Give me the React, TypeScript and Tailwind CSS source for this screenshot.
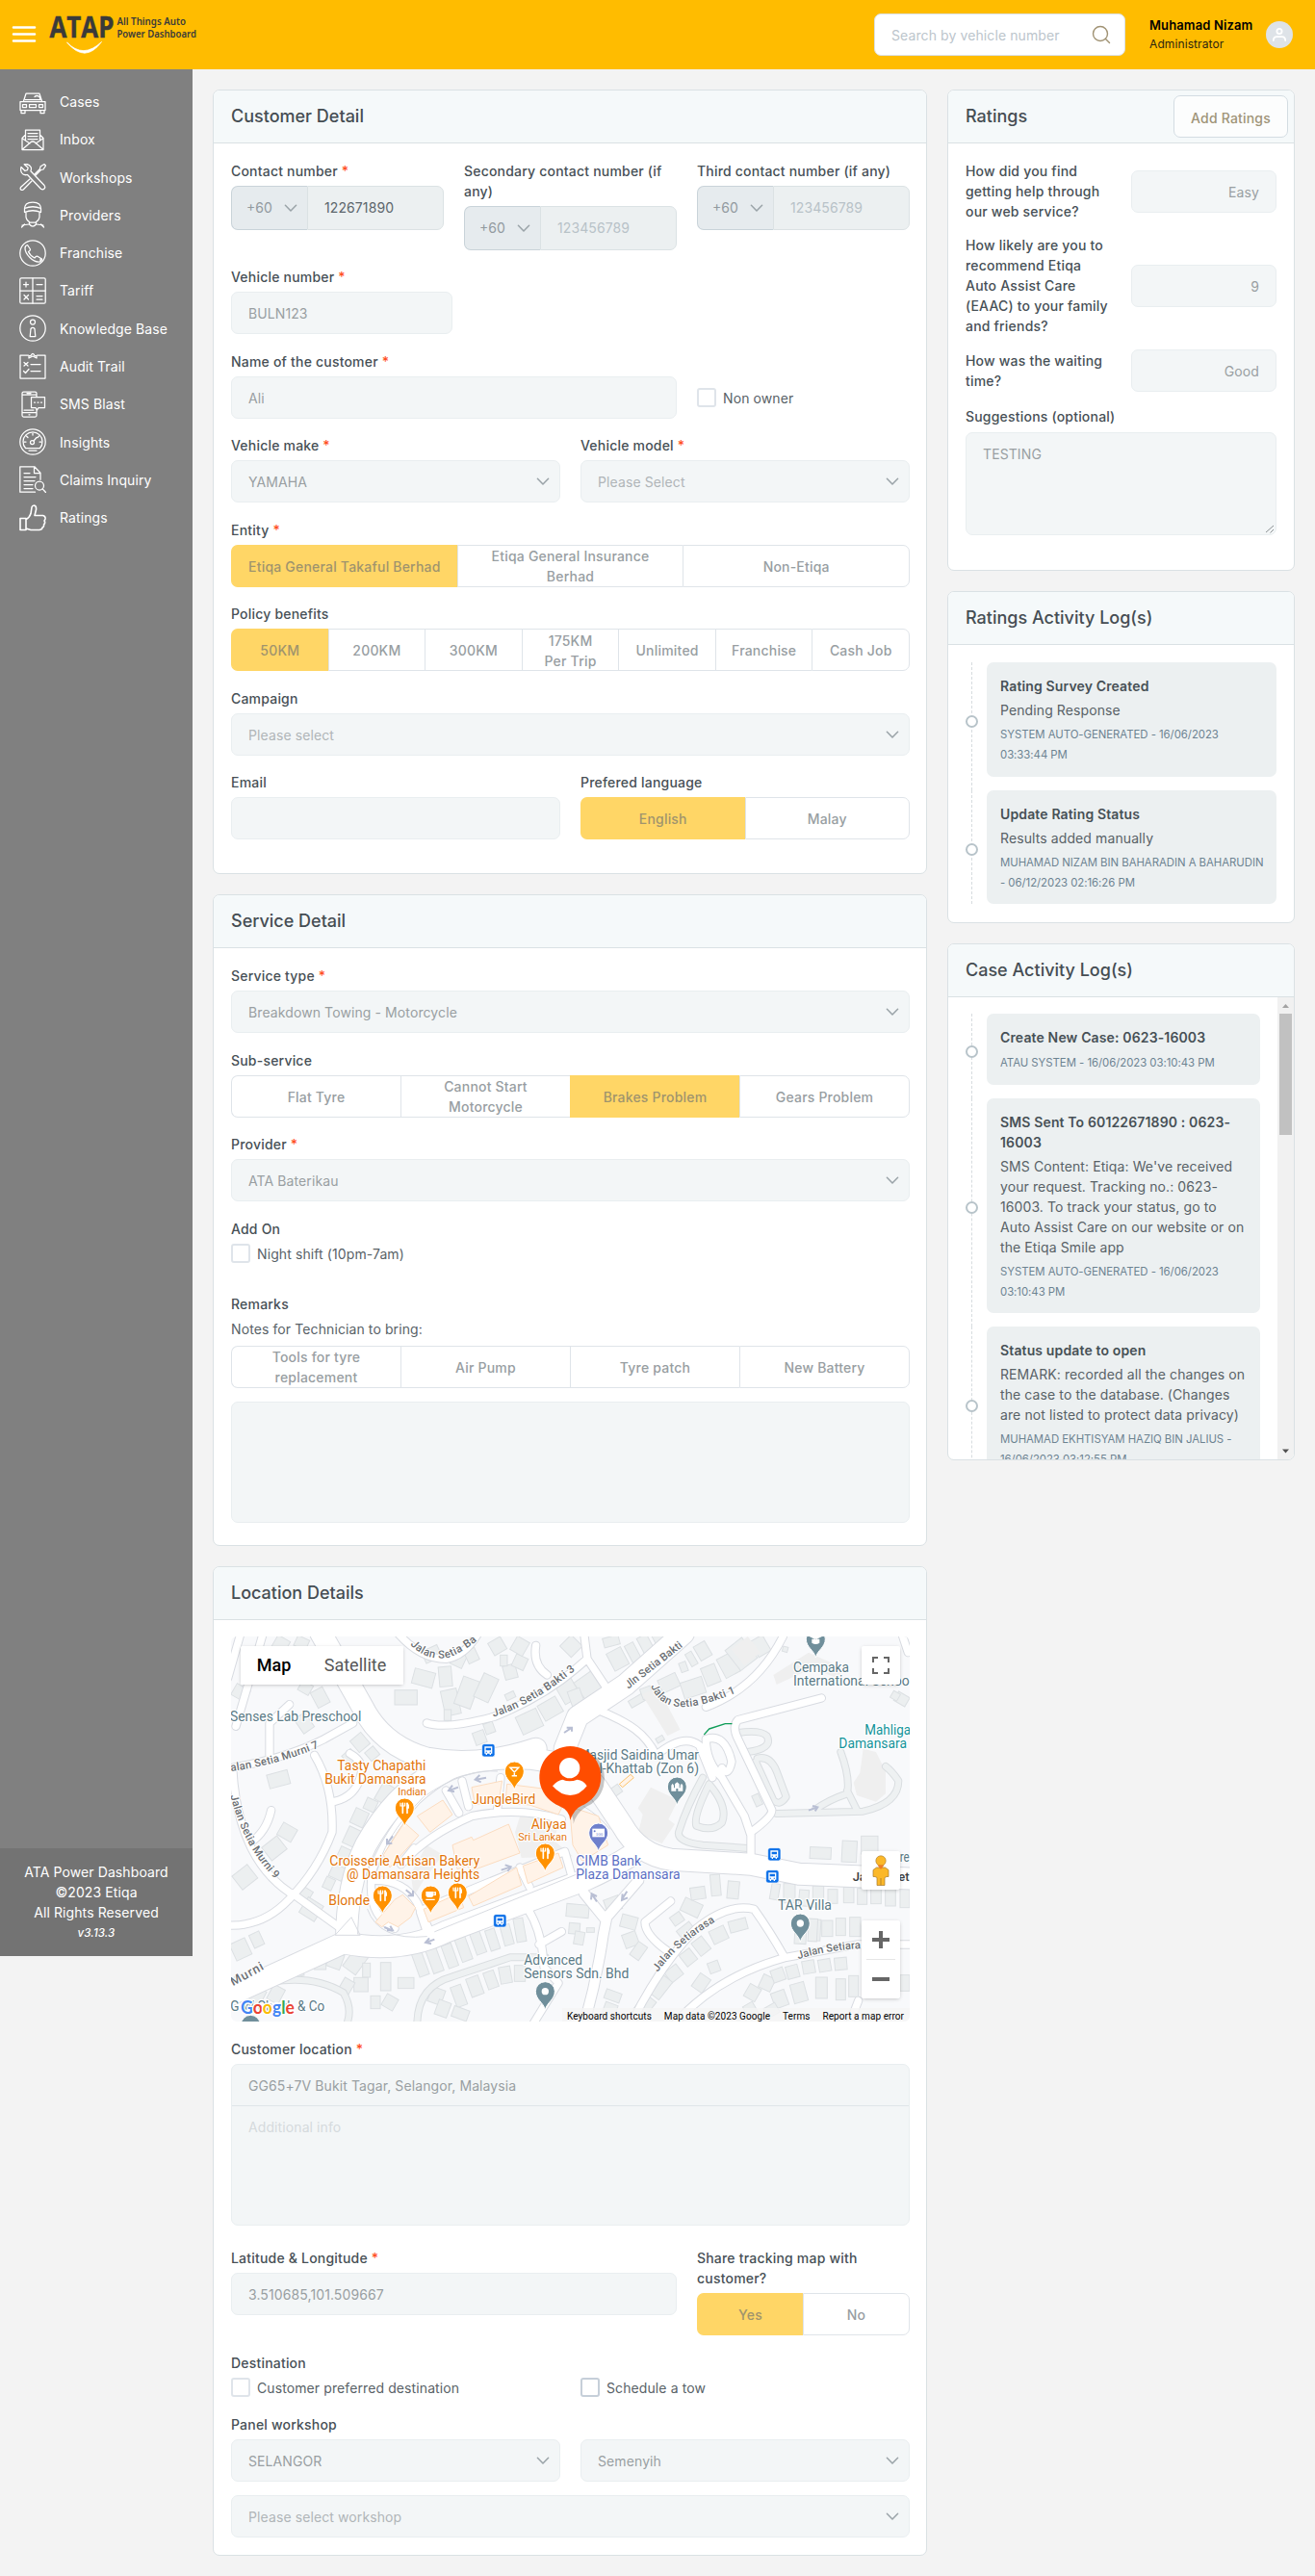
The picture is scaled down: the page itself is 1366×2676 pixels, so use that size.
import type { ReactNode } from "react";

/* ---------- shared form pieces ---------- */

function Chevron({ className = "" }: { className?: string }) {
  return (
    <svg width="14" height="14" viewBox="0 0 14 14" fill="none" className={"shrink-0 " + className}>
      <path d="M1.4 4.2 7 10l5.6-5.8" stroke="#9aa3a8" strokeWidth="1.5" strokeLinecap="round" strokeLinejoin="round" />
    </svg>
  );
}

function Label({ children, required = false }: { children: ReactNode; required?: boolean }) {
  return (
    <div className="mb-[5px] text-[14px] leading-[21px] font-medium tracking-[0.2px] text-[#475056]">
      {children}
      {required && <span className="text-[#ff4f1f]"> *</span>}
    </div>
  );
}

function Field({ label, required, className = "", children }: { label: string; required?: boolean; className?: string; children: ReactNode }) {
  return (
    <div className={className}>
      <Label required={required}>{label}</Label>
      {children}
    </div>
  );
}

function Input({ value = "", right = false }: { value?: string; right?: boolean }) {
  return (
    <div
      className={
        "flex h-11 items-center rounded-[7px] border border-[#e9eef0] bg-[#f3f6f7] px-[17px] pt-px text-[14px] leading-[21px] tracking-[0.1px] text-[#999fa2] " +
        (right ? "justify-end" : "")
      }
    >
      {value}
    </div>
  );
}

function Select({ value, muted = false }: { value: string; muted?: boolean }) {
  return (
    <div className="flex h-11 items-center justify-between rounded-[7px] border border-[#e9eef0] bg-[#f3f6f7] pr-[10px] pl-[17px] text-[14px] leading-[21px] tracking-[0.1px]">
      <span className={muted ? "pt-px text-[#b0b5b8]" : "pt-px text-[#999fa2]"}>{value}</span>
      <Chevron />
    </div>
  );
}

function Phone({ value, filled = false }: { value: string; filled?: boolean }) {
  return (
    <div className="flex h-[46px] text-[14px] leading-[21px]">
      <div className="flex w-[79px] shrink-0 items-center justify-between rounded-l-[7px] border border-r-0 border-[#c9d3d9] bg-[#e6ebee] pr-[10px] pl-[15px] text-[#929a9f]">
        <span>+60</span>
        <Chevron />
      </div>
      <div
        className={
          "flex grow items-center rounded-r-[7px] border border-[#dbe2e4] bg-[#ecf0f1] pl-[17px] tracking-[0.1px] " +
          (filled ? "text-[#5c666c]" : "text-[#b8c2c8]")
        }
      >
        {value}
      </div>
    </div>
  );
}

function Segmented({ items, selected = -1 }: { items: string[]; selected?: number }) {
  return (
    <div className="flex h-11 text-[14px] leading-[21px] font-medium tracking-[0.2px]">
      {items.map((item, i) => (
        <div
          key={item}
          className={
            "flex min-w-0 flex-1 items-center justify-center border-y text-center whitespace-pre-line " +
            (i === 0 ? "rounded-l-[7px] border-l " : "border-l ") +
            (i === items.length - 1 ? "rounded-r-[7px] border-r " : "") +
            (i === selected
              ? "border-[#ffd666] bg-[#ffd666] text-[#9f946d]"
              : "border-[#dfe4e9] text-[#989ea2]")
          }
        >
          <span className="pt-px">{item}</span>
        </div>
      ))}
    </div>
  );
}

function Check({ label, dark = false }: { label: string; dark?: boolean }) {
  return (
    <div className="flex h-5 items-center gap-[7px] text-[14px] leading-[21px] tracking-[0.1px] text-[#596267]">
      <span className={"h-5 w-5 rounded-[3px] border-2 bg-white " + (dark ? "border-[#c6cfd9]" : "border-[#dfe4ea]")} />
      <span className="pt-px">{label}</span>
    </div>
  );
}

function Card({ title, action, children }: { title: string; action?: ReactNode; children: ReactNode }) {
  return (
    <section className="overflow-hidden rounded-[7px] border border-[#dae1e4] bg-white">
      <header className="flex h-[55px] items-center justify-between border-b border-[#dae1e4] bg-[#f5f9fa] pr-[6px] pl-[18px]">
        <h2 className="text-[18px] leading-[24px] font-medium text-[#454d53]">{title}</h2>
        {action}
      </header>
      {children}
    </section>
  );
}

/* ---------- sidebar ---------- */

const icons: Record<string, ReactNode> = {
  Cases: (
    <>
      <path d="M4.5 13 7 5.2h14L23.5 13M1 13.5h26v9H1zM2 22.5v3h4v-3M22 22.5v3h4v-3M16 8.5q2-2 5 0l1 3" />
      <path d="M3.5 16.5h4v3h-4zM20.5 16.5h4v3h-4zM10.5 16.5h7v3h-7zM6 11.5h16" />
    </>
  ),
  Inbox: (
    <>
      <path d="M3 12.5v12h22v-12M3 12.5l3-3M25 12.5l-3-3M6.5 15V4h15v11M3.5 13l7.5 5M24.5 13 17 18M3.5 24l8-7q2.500-2 5 0l8 7" />
      <path d="M9 7.500h10M9 10.500h10M9 13.500h10" />
    </>
  ),
  Workshops: (
    <>
      <path d="M2 3.500l4 4 2.500-.8.700-2.500-4-3.500q5-1 7 3 .6 2-.3 4L26 22.500q1.500 2 0 3.500t-3.500.2L8.500 11.500q-4 1-6-2-1.500-3-.5-6z" />
      <path d="M16 11 21.500 5.500 22 3l4-2.500 1.500 1.500L25 6l-2.500.5L17 12M11 16 1.500 24.500q-.8 1.500.2 2.500t2.500 0L13 18" />
    </>
  ),
  Providers: (
    <>
      <path d="M5.500 9Q5 1 14 1t8.500 8M5.500 7.500q8.500-3.500 17 0v4q-8.500-3.500-17 0zM7 11.500v5Q7.500 20 11 22h6q3.500-2 4-5.500v-5M10.500 21.500v2.500q3.500 4 7 0v-2.500" />
      <path d="M10 24l-7 1M18 24l7 1M2.500 27l3-3M25.500 27l-3-3" />
    </>
  ),
  Franchise: (
    <>
      <circle cx="14" cy="14" r="13.200" />
      <path d="M6 9q0-3 2.500-3.500l3 4.500q0 1.500-2 2.500 2 4.500 6.500 6.500 1-2 2.500-2l5 3q.5 2-2.500 3-5 .5-10-4.500T6 9zM22 20v3" />
    </>
  ),
  Tariff: (
    <>
      <rect x=".8" y=".8" width="26.400" height="26.400" rx="1.500" />
      <path d="M14 1v26M1 14h26M4.500 7.500h5M7 5v5M18 7.500h6M5 18.500l4.500 4.500M9.500 18.500 5 23M18 19.500h6M18 23h6" />
    </>
  ),
  "Knowledge Base": (
    <>
      <circle cx="14" cy="14" r="13.200" />
      <circle cx="14" cy="7.500" r="2.500" />
      <path d="M12 14.500q2-2.500 4 0l.8 8h-5.600z" />
    </>
  ),
  "Audit Trail": (
    <>
      <path d="M9.500 3H1v24h26V3h-8.500" />
      <path d="M10 6V3.500h2Q14-1 16 3.500h2V6l-4-2zM5 10.500l4 3.500M9 10.500 5 14M12 12.500h10M4.500 19.500l2 2 3.500-4M12 19.500h10" />
    </>
  ),
  "SMS Blast": (
    <>
      <path d="M18 6V2.500Q18 1 16.500 1h-12Q3 1 3 2.500v23Q3 27 4.500 27h12q1.500 0 1.500-1.500V19M3 4h15M3 22.500h15M8 2.500h4M10 24.800h1" />
      <path d="M12.500 6.500h14v11H20l-1.500 2.500-1.500-2.500h-4.500zM15.500 12h1M19 12h1M22.500 12h1M5 20h10" />
    </>
  ),
  Insights: (
    <>
      <circle cx="14" cy="14" r="13.200" />
      <path d="M6.500 20.500a10 10 0 1 1 15 0zM10 23h8" />
      <circle cx="13.500" cy="14.500" r="2" />
      <path d="M15 13l3-3.500M14 5v2M7.500 8l1.500 1.500M20.500 8 19 9.500M5 14h2M21 14h2" />
    </>
  ),
  "Claims Inquiry": (
    <>
      <path d="M16.500 27.200H.8V.8h15l6.200 6.500v7M15.500 1v6.500H22M5 7.500h6M5 11.500h12M5 15.500h11M5 19.500h9M5 23.500h9" />
      <circle cx="21" cy="20.500" r="4.500" />
      <path d="M24.200 23.800 27.500 27.500" />
    </>
  ),
  Ratings: (
    <path d="M1 14.500h6V26.500H1zM7 15.500q3.500-1.500 5-6l1-6.500q.5-2 2.500-2 2.500.5 2 4.500l-1.500 6h8.500q3 .5 2.500 3.500-.5 1.500-1 2 1.500 2-.5 4 .5 2.500-1.500 3 0 2-3 2.500H12l-5-1.500" strokeWidth="1.600" />
  ),
};

const menu = Object.keys(icons);

function Sidebar() {
  return (
    <aside className="flex h-[1960px] w-[200px] shrink-0 flex-col justify-between bg-[#808080] text-white">
      <nav className="pt-[14px]">
        {menu.map((name) => (
          <a key={name} className="flex h-[39.270px] items-center gap-[14px] pl-5 text-[14px] leading-[21px] tracking-[0.1px]">
            <svg width="28" height="28" viewBox="0 0 28 28" fill="none" stroke="#fff" strokeWidth="1.250" strokeLinejoin="round" strokeLinecap="round">
              {icons[name]}
            </svg>
            <span>{name}</span>
          </a>
        ))}
      </nav>
      <footer className="h-28 bg-[#737373] pt-[14px] text-center text-[14px] leading-[21px] tracking-[0.1px]">
        ATA Power Dashboard
        <br />
        ©2023 Etiqa
        <br />
        All Rights Reserved
        <div className="pt-px text-[11.500px] font-medium italic">v3.13.3</div>
      </footer>
    </aside>
  );
}

/* ---------- header ---------- */

function TopBar() {
  return (
    <header className="flex h-[72px] items-center justify-between bg-[#ffbc00] pr-[23px] pl-[12px]">
      <div className="flex items-center">
        <svg width="26" height="20" viewBox="0 0 26 20" stroke="#fff" strokeWidth="2.600" strokeLinecap="round">
          <path d="M2 2.500h22M2 9.500h22M2 16.500h22" />
        </svg>
        <svg width="160" height="72" viewBox="0 -14 160 72" className="ml-3">
          <text x="1.500" y="25" fontFamily="Open Sans, Noto Sans" fontWeight="700" fontSize="30.500" fill="#3a3a3a" stroke="#3a3a3a" strokeWidth=".5" textLength="67" lengthAdjust="spacingAndGlyphs">
            ATAP
          </text>
          <g fontFamily="Noto Sans" fontWeight="600" fontSize="11.500" fill="#3a3a3a">
            <text x="71.500" y="12" textLength="71.500" lengthAdjust="spacingAndGlyphs">All Things Auto</text>
            <text x="71.500" y="25" textLength="82.500" lengthAdjust="spacingAndGlyphs">Power Dashboard</text>
          </g>
          <path d="M19.500 30q17 17.500 36-.5-17 23-36 .5z" fill="#fff" stroke="#fff" strokeWidth=".8" strokeLinejoin="round" />
        </svg>
      </div>
      <div className="flex items-center">
        <div className="flex h-11 w-[261px] items-center justify-between rounded-[7px] border border-[#dbe1e6] bg-white pr-[14px] pl-[17px] text-[14px] leading-[21px] tracking-[0.1px] text-[#bcc5cc]">
          <span className="pt-px">Search by vehicle number</span>
          <svg width="20" height="20" viewBox="0 0 20 20" fill="none" stroke="#a09273" strokeWidth="1.400" strokeLinecap="round">
            <circle cx="9" cy="9" r="7.500" />
            <path d="m14.500 14.500 4 4" />
          </svg>
        </div>
        <div className="ml-[25px] w-[121px]">
          <div className="text-[13px] leading-[19px] font-semibold tracking-[0.120px] text-black">Muhamad Nizam</div>
          <div className="text-[12px] leading-[19px] tracking-[0.1px] text-[#2c2510]">Administrator</div>
        </div>
        <svg width="28" height="28" viewBox="0 0 28 28" fill="none" stroke="#fff" strokeWidth="1.800" strokeLinecap="round">
          <circle cx="14" cy="14" r="14" fill="#dee3e8" stroke="none" />
          <circle cx="14" cy="10.500" r="2.600" />
          <path d="M7.800 20q0-3.800 3.700-3.800h5q3.700 0 3.700 3.800" />
        </svg>
      </div>
    </header>
  );
}

/* ---------- map ---------- */

type Block = [number, number, number, number, number];

/* Buildings: centre x, centre y, width, height, rotation. */
const houses: Block[] = [
  [60, 205, 48, 40, 30], [105, 140, 40, 48, 28], [160, 110, 40, 50, 28], [185, 55, 44, 44, 30], [308, 220, 42, 54, -28], [262, 190, 38, 34, 30], [258, 300, 40, 54, -35], [250, 50, 40, 34, 25],
  [178, 475, 66, 44, -15], [510, 520, 44, 60, 30], [432, 360, 44, 46, -40], [400, 405, 36, 36, -40], [470, 395, 34, 34, -40],
  [165, 690, 60, 52, -38], [205, 640, 50, 44, 30], [73, 780, 60, 54, -38], [252, 835, 50, 50, 32], [280, 880, 56, 56, 32], [430, 595, 44, 50, 25], [408, 655, 44, 56, 25], [385, 712, 44, 44, 25], [362, 765, 44, 42, 25], [335, 800, 30, 36, 25], [465, 555, 36, 36, 25],
  [60, 1005, 52, 56, -25], [110, 975, 34, 44, -25], [60, 1110, 52, 50, -25], [110, 1150, 44, 50, 28], [170, 1145, 40, 50, 28],
  [185, 1075, 44, 50, -20], [232, 1065, 40, 54, -15], [308, 1038, 36, 60, 0], [355, 1040, 44, 48, 20], [420, 1040, 50, 76, 36],
  [452, 1070, 24, 44, 0], [435, 1115, 44, 44, 0], [512, 1090, 32, 88, 0], [575, 1110, 50, 34, 0], [480, 1170, 30, 40, 0], [525, 1170, 40, 40, 30], [390, 1120, 36, 44, 30],
  [620, 1050, 32, 78, -20], [665, 1040, 34, 76, -20], [712, 1025, 32, 74, -20], [755, 1005, 34, 74, -20], [800, 985, 32, 70, -20], [845, 975, 30, 66, -18], [890, 960, 30, 64, -15], [930, 945, 30, 74, -10],
  [670, 1150, 44, 48, 20], [690, 1190, 40, 48, 20], [740, 1150, 34, 66, -20], [790, 1120, 40, 60, -20], [840, 1100, 34, 54, -20], [885, 1085, 36, 52, -10], [930, 1080, 34, 50, 0], [745, 1205, 50, 34, 20],
  [575, 220, 70, 46, 0], [630, 160, 66, 48, 15], [698, 155, 40, 62, -5], [655, 85, 54, 40, -25], [715, 235, 50, 80, -12], [765, 205, 54, 90, 20], [825, 190, 50, 80, 25], [705, 275, 22, 34, 0], [835, 315, 30, 34, -20], [805, 345, 36, 40, -20], [740, 100, 40, 48, 25], [780, 90, 36, 40, -25],
  [900, 140, 40, 44, -15], [880, 105, 22, 34, 0], [930, 110, 40, 40, 25], [860, 60, 44, 44, -30], [930, 60, 44, 48, 30], [900, 215, 30, 20, -25], [960, 295, 70, 60, -25], [1025, 255, 64, 54, -30], [1080, 200, 56, 66, -30],
  [1145, 185, 66, 70, -35], [1105, 220, 40, 50, -20], [1090, 60, 50, 50, -45], [1215, 45, 50, 30, -15], [1235, 100, 50, 60, -28], [1285, 85, 30, 70, -28], [1325, 60, 34, 70, -28], [1370, 45, 36, 60, -28],
  [1395, 175, 60, 44, -25], [1440, 125, 22, 30, -20], [1465, 100, 22, 44, -30], [1500, 75, 40, 50, -30], [1470, 190, 70, 52, -18], [1525, 150, 46, 60, -22], [1580, 120, 50, 66, -28], [1620, 85, 66, 80, -38], [1680, 60, 44, 56, -30], [1295, 230, 50, 24, -30], [1325, 205, 34, 34, -20], [1367, 350, 24, 16, -30], [1757, 70, 16, 16, 15],
  [1110, 885, 70, 40, 5], [1100, 940, 34, 34, 5], [1150, 945, 24, 14, 0], [1115, 970, 30, 40, 10], [1220, 865, 48, 44, -20], [1270, 920, 50, 40, 15], [1275, 975, 44, 44, -20], [1420, 910, 36, 32, -35], [1465, 875, 60, 44, 25], [1485, 830, 46, 38, -8], [1540, 805, 30, 66, -5], [1595, 820, 36, 54, 5],
  [1450, 950, 50, 42, -38], [1455, 1030, 40, 44, -38], [1495, 995, 40, 50, -38], [1550, 960, 50, 44, -25], [1610, 930, 56, 36, -15], [1495, 1110, 40, 50, 35], [1535, 1060, 34, 34, -20], [1410, 1080, 46, 40, -38], [1365, 1120, 50, 70, 38], [1320, 1180, 44, 60, 38], [1300, 1010, 34, 50, 35], [1220, 1150, 50, 30, 20], [1210, 1195, 40, 44, 20],
  [1725, 825, 26, 50, 10], [1770, 830, 36, 60, 0], [1815, 845, 30, 50, 5], [1860, 840, 34, 66, 0], [1905, 840, 30, 44, 0], [1955, 835, 32, 50, 0], [1997, 840, 30, 50, 0], [2040, 835, 32, 56, 0], [2085, 840, 32, 60, 0], [2130, 840, 30, 70, 0],
  [1867, 705, 66, 36, 3], [1957, 700, 46, 66, 3], [2020, 680, 52, 56, 0], [1805, 950, 36, 76, 3], [1850, 945, 34, 66, 3], [1888, 940, 34, 50, 0], [1930, 935, 30, 54, 0], [1975, 935, 34, 60, 0], [1843, 945, 28, 70, 3],
  [1700, 1110, 40, 44, 25], [1735, 1085, 40, 40, -20], [1780, 1075, 38, 40, -15], [1830, 1060, 38, 40, -10], [1880, 1055, 38, 38, -10], [1930, 1050, 38, 38, -5], [1655, 1140, 40, 44, 30], [1740, 1160, 44, 50, -20], [1800, 1140, 44, 60, -15], [1870, 1125, 36, 66, 0], [1930, 1130, 30, 66, 0], [1970, 1120, 30, 66, 0], [1650, 1195, 34, 44, -30], [1715, 1195, 40, 34, -30], [2130, 1110, 30, 50, 0],
  [1670, 540, 22, 36, -25], [1230, 510, 30, 28, -35], [2120, 225, 40, 32, 30], [2100, 215, 24, 24, 30],
];

function Pin({ x, y, color, children }: { x: number; y: number; color: string; children?: ReactNode }) {
  return (
    <g transform={`translate(${x} ${y})`}>
      <path d="M0 58C-5 34-30 26-30 0a30 30 0 0 1 60 0C30 26 5 34 0 58z" fill={color} stroke="#fff" strokeWidth="3" />
      {children}
    </g>
  );
}

function Fork() {
  return (
    <g stroke="#fff" strokeLinecap="round" fill="none">
      <path d="M-6-14V16M8-14V16" strokeWidth="5" />
      <path d="M-13-15v9h14v-9M-6-15v9" strokeWidth="3.500" />
      <path d="M8-14q5 4 4 14H8" strokeWidth="4" fill="#fff" />
    </g>
  );
}

function Bus({ x, y }: { x: number; y: number }) {
  return (
    <g transform={`translate(${x} ${y})`}>
      <rect x="-20" y="-20" width="40" height="40" rx="7" fill="#0b6fe8" stroke="#fff" strokeWidth="2" />
      <path d="M-12-12h24v22h-4v4h-4v-4h-8v4h-4v-4h-4z" fill="#fff" />
      <path d="M-8-8H8V0H-8zM-8 4h4v3h-4zM4 4h4v3H4z" fill="#0b6fe8" />
    </g>
  );
}

type Tag = [string, number, number, number, number, string];

/* Place names: text, x, baseline y, font size, width, colour. */
const tags: Tag[] = [
  ["Senses Lab Preschool", 27, 294, 42, 409, "#5a7a86"],
  ["Tasty Chapathi", 361, 447, 42, 276, "#e2750b"],
  ["Bukit Damansara", 322, 489, 42, 316, "#e2750b"],
  ["Indian", 550, 525, 35, 88, "#e2750b"],
  ["JungleBird", 781, 552, 42, 198, "#e2750b"],
  ["Aliyaa", 965, 630, 42, 111, "#e2750b"],
  ["Sri Lankan", 925, 666, 35, 152, "#e2750b"],
  ["Croisserie Artisan Bakery", 337, 744, 42, 468, "#e2750b"],
  ["@ Damansara Heights", 390, 786, 42, 415, "#e2750b"],
  ["Blonde", 334, 867, 42, 128, "#e2750b"],
  ["Advanced", 943, 1053, 42, 182, "#5a7a86"],
  ["Sensors Sdn. Bhd", 943, 1095, 42, 327, "#5a7a86"],
  ["G W Chegh & Co", 28, 1197, 42, 294, "#5a7a86"],
  ["Masjid Saidina Umar", 1112, 414, 42, 376, "#5a7a86"],
  ["Al-Khattab (Zon 6)", 1150, 456, 42, 338, "#5a7a86"],
  ["CIMB Bank", 1105, 744, 42, 203, "#5b6fc4"],
  ["Plaza Damansara", 1105, 786, 42, 325, "#5b6fc4"],
  ["Cempaka", 1782, 141, 42, 174, "#5a7a86"],
  ["International Schoo", 1782, 184, 42, 362, "#5a7a86"],
  ["Mahliga", 2005, 336, 42, 143, "#12939a"],
  ["Damansara", 1924, 378, 42, 212, "#12939a"],
  ["TAR Villa", 1734, 882, 42, 168, "#5a7a86"],
  ["re", 2114, 733, 42, 30, "#5a7a86"],
];

const streets = {
  bakti: "M588 55Q640 110 710 95 760 75 800 40",
  bakti3: "M848 280Q960 250 1105 133",
  jln: "M1268 194 1440 60",
  bakti1: "M1338 184C1370 260 1440 275 1612 202",
  murni7: "M30 450Q180 430 312 372",
  murni9: "M28 526Q70 690 172 790",
  murni: "M36 1120 142 1062",
  rasa: "M1360 1076Q1420 990 1545 915",
  rasa2: "M1798 1036Q1880 1008 1998 1002",
};

const streetNames: [keyof typeof streets, string, number, number][] = [
  ["bakti", "Jalan Setia Ba", 34, 236],
  ["bakti3", "Jalan Setia Bakti 3", 34, 295],
  ["jln", "Jln Setia Bakti", 34, 216],
  ["bakti1", "Jalan Setia Bakti 1", 34, 300],
  ["murni7", "alan Setia Murni 7", 34, 285],
  ["murni9", "Jalan Setia Murni 9", 34, 298],
  ["murni", "Murni", 39, 112],
  ["rasa", "Jalan Setiarasa", 34, 240],
  ["rasa2", "Jalan Setiara", 34, 198],
];

const minorRoads =
  "M130 20 45 310M60 20 20 160M150 400V300L212 242M30 440Q200 410 320 350L410 300M35 440Q50 720 215 830M290 400Q350 500 345 640 300 760 210 850 130 935 20 930M220 830 400 960M350 545Q420 530 435 460 445 420 400 395M90 672Q140 640 155 572M640 300Q700 320 850 280 1000 220 1105 130L1140 100 1130 20M1140 100 1200 190M550 20Q620 100 700 100 760 90 800 20M980 58Q970 120 1015 150M1175 260Q1250 290 1290 320 1330 350 1355 400M1355 400Q1440 330 1490 370L1530 470M1870 222 1610 290Q1590 310 1610 350L1715 570Q1720 590 1650 640V730M1510 350Q1570 330 1590 420 1580 470 1560 440M1510 350Q1510 420 1560 470L1630 590 1650 650M1750 30Q1670 190 1510 250M1960 1230 1985 1165M1280 1230Q1370 1050 1480 940 1580 860 1660 880 1710 950 1755 1030M1410 1240Q1540 1090 1760 1030L1980 990 2150 990M1400 855 1320 920Q1320 960 1390 1010M955 880Q1000 950 1005 1060L1050 1110 970 1240M1060 950 990 990M2120 20 2140 80";
const grayRoads =
  "M1500 470Q1450 560 1425 640 1420 670 1500 680L1640 690M1520 490Q1470 590 1480 620 1530 640 1560 610 1580 560 1520 490M1730 582 2000 575Q2110 550 2110 480 2090 450 2070 435M1850 570Q1890 540 1950 520 1960 470 1930 390M1950 510 1980 570M610 1240Q610 1120 720 1090L900 1030 1010 1030M1610 330Q1680 320 1700 340 1720 380 1640 390M1670 410Q1710 400 1730 450L1760 530Q1740 560 1720 540L1665 420M30 1140Q250 1060 380 1140 410 1190 390 1240";
const loopRoads =
  "M540 940Q450 900 470 760 520 640 610 540 730 430 900 400L1050 400M560 740Q640 650 780 590 930 560 1060 600M600 690 560 740M630 880 800 810 1070 700 1090 770M650 950 610 860Q570 790 480 790M750 480 770 560M870 470 860 570M700 510 740 580M930 750 960 810M640 950 620 890";
const mainRoads =
  "M310 20 440 250Q500 370 640 410 800 440 980 380M390 980Q390 800 450 680 540 520 660 460 800 400 960 410 1120 430 1170 500L1250 620Q1300 710 1400 725L1650 740 1800 770 2160 785M20 1150Q150 1090 380 985 560 1020 700 950L1130 790Q1220 750 1280 710M1070 380 1110 280 1260 180 1440 20";
const forkRoad = "M1202 900 1190 960Q1170 1100 1130 1240M1195 910 1130 830M1205 900 1300 790";

function StreetMap() {
  return (
    <svg width="705" height="400" viewBox="0 0 705 400" className="block">
      <rect width="705" height="400" fill="#f8f9fb" />
      <g transform="translate(-10 -10) scale(.33333)">
        <g fill="#eceff0" stroke="#dce0e3" strokeWidth="3">
          {houses.map(([x, y, w, h, r], i) => (
            <rect key={i} x={x - w / 2} y={y - h / 2} width={w} height={h} transform={`rotate(${r} ${x} ${y})`} />
          ))}
          <g fill="#efefef" stroke="none">
            <path d="m1338 500 85 40-30 60 20 15-40 60-75-30 15-60-15-20zM1310 210l50-20 70 130-40 20zM1720 150l110-70 110 50-20 30-80-30-110 50zM2000 380l40 10 30 60v70l-30 25-60-20-10-40 20-30zM1590 70l50-40 40 50-50 40zM935 575l120 30-20 60 60 50-160 5-20-80z" />
            <path d="m640 680 50 30-60 80-30 50-10-70z" />
          </g>
        </g>

        <g fill="none" strokeLinejoin="round" strokeLinecap="round">
          <path d={grayRoads} stroke="#d9dde0" strokeWidth="24" />
          <path d={grayRoads} stroke="#eef1f2" strokeWidth="18" />
          <path d={minorRoads} stroke="#d8dbe1" strokeWidth="28" />
          <path d={loopRoads} stroke="#d8dbe1" strokeWidth="28" />
          <path d={forkRoad} stroke="#d8dbe1" strokeWidth="36" />
          <path d={mainRoads} stroke="#d8dbe1" strokeWidth="72" />
          <path d={minorRoads} stroke="#fff" strokeWidth="22" />
          <path d={loopRoads} stroke="#fff" strokeWidth="22" />
          <path d={forkRoad} stroke="#fff" strokeWidth="30" />
          <path d={mainRoads} stroke="#fff" strokeWidth="66" />
          <path d="M355 960 405 905 432 960zM480 780Q500 660 630 530 760 440 860 450M665 950 1110 770M455 880Q490 980 640 965M1130 560Q1180 590 1210 630" stroke="#d8dbe1" strokeWidth="3" />
          <path d="m1505 335 15-17 50-16h20" stroke="#0f9d58" strokeWidth="4" />
        </g>

        <g fill="#fff3e8" stroke="#fbdcc0" strokeWidth="3">
          <path d="m610 590 80-50 30 45-70 55zM780 500l95-20-10 60-75 15zM890 490l120 15 50 60-10 20-90-30-75-5zM720 680l60-25 5 10 110-50 35 90-150 55-15-15-30 10zM630 880l110-50 15 45-110 45zM770 840l150-90 15 55-150 65zM940 745l110-40 15 45-110 50zM570 610l45 40-90 100-20-40zM480 920l60-70 25-15 40 40-15 30-40 30-30-15-20 15zM1085 560l90 30 30 90-80 50-30-50z" />
          <path d="m1240 490 35-30 10 10-35 30z" stroke="#fcc36c" />
        </g>

        <g fill="none" stroke="#b9bfd4" strokeWidth="6">
          <path d="m825 470-32 6m12-14-14 14 18 8M738 500l-28 10m10-16-12 16 18 4M534 652l-18 24m0-16 0 16 16-2M575 820l22 18m0-16 0 16-16 0M508 936l24 10m-6-14 8 14-18 0M664 974l-26 10m10-14-12 14 18 4M872 758l30-10m-18-6 18 6-10 14M1068 330l24-16m-16 0 16 0 0 12M1170 856l-16-24m-2 18 2-18 16 8M1264 824l-16 26m18-6-18 8 2-20M1830 572l28-10m-16-4 16 4-8 12" />
        </g>

        <g fontFamily="Roboto, sans-serif" fontWeight="500" fill="#6b6f74" stroke="#fff" strokeWidth="6" strokeLinejoin="round">
          {streetNames.map(([id, name, size, len]) => (
            <g key={id}>
              <path id={"street-" + id} d={streets[id]} fill="none" stroke="none" />
              <text fontSize={size} paintOrder="stroke" textLength={len}>
                <textPath href={"#street-" + id}>{name}</textPath>
              </text>
            </g>
          ))}
          <text x="1967" y="793" fontSize="39" paintOrder="stroke" fill="#3c4043">Jalan</text>
          <text x="2110" y="793" fontSize="39" paintOrder="stroke" fill="#3c4043">et</text>
        </g>

        <g fontFamily="Roboto, sans-serif" stroke="#fff" strokeWidth="7" strokeLinejoin="round">
          {tags.map(([text, x, y, size, width, color]) => (
            <text key={text} x={x} y={y} fontSize={size} fill={color} textLength={width} lengthAdjust="spacingAndGlyphs" paintOrder="stroke">
              {text}
            </text>
          ))}
        </g>

        <Bus x={832} y={385} />
        <Bus x={868} y={916} />
        <Bus x={1723} y={709} />
        <Bus x={1717} y={778} />

        <Pin x={571} y={564} color="#ff9100"><Fork /></Pin>
        <Pin x={1009} y={705} color="#ff9100"><Fork /></Pin>
        <Pin x={502} y={837} color="#ff9100"><Fork /></Pin>
        <Pin x={736} y={828} color="#ff9100"><Fork /></Pin>
        <Pin x={652} y={837} color="#ff9100">
          <path d="M-15-12h24v10q0 8-8 8h-8q-8 0-8-8z" fill="#fff" />
          <path d="M9-9h6v7H9M-15 13h28" fill="none" stroke="#fff" strokeWidth="4" />
        </Pin>
        <Pin x={913} y={450} color="#ff9100">
          <path d="M-13-11h26L0 3zM0 0v14M-8 14H8" fill="none" stroke="#fff" strokeWidth="4.500" />
        </Pin>
        <Pin x={1175} y={642} color="#6f80cc">
          <rect x="-19" y="-13" width="38" height="26" fill="#fff" />
          <text x="-9" y="10" fontSize="15" fontFamily="Liberation Serif, serif" fill="#6f80cc">100</text>
          <circle cx="-12" cy="-5" r="3" fill="#6f80cc" />
        </Pin>
        <Pin x={1420} y={498} color="#708f9b">
          <path d="M-18 14V-4l4-6 4 6v8h3v-12L0-14l7 6V4h3v-8l4-6 4 6v18H3V6h-6v8z" fill="#fff" />
        </Pin>
        <Pin x={1852} y={38} color="#708f9b">
          <path d="M-20-8 0-18 20-8 0 2zM-12 0v12q12 8 24 0V0" fill="#fff" />
        </Pin>
        <Pin x={1009} y={1136} color="#708f9b"><circle r="11" fill="#fff" /></Pin>
        <Pin x={1804} y={924} color="#708f9b"><circle r="11" fill="#fff" /></Pin>
        <Pin x={91} y={1240} color="#708f9b" />

        <g transform="translate(1087 468)">
          <path d="M2 140Q4 105-36 88a97 97 0 1 1 76 0Q10 108 2 140z" fill="#000" opacity=".22" transform="translate(8 6)" />
          <path d="M0 134Q-2 104-34 90a96 96 0 1 1 68 0Q12 100 0 134z" fill="#ff4d00" />
          <circle cx="-2" cy="-28" r="32" fill="#fff" />
          <path d="M-55 28Q-40 10-24 8-2 18 22 8 42 10 52 28 30 57 0 57T-55 28z" fill="#fff" />
        </g>

        <g fontFamily="Lato, sans-serif" fontWeight="700" fontSize="55" stroke="#fff" strokeWidth="9" strokeLinejoin="round">
          <text x="60" y="1205" textLength="168" lengthAdjust="spacingAndGlyphs" paintOrder="stroke">
            <tspan fill="#4285f4">G</tspan>
            <tspan fill="#ea4335">o</tspan>
            <tspan fill="#fbbc04">o</tspan>
            <tspan fill="#4285f4">g</tspan>
            <tspan fill="#34a853">l</tspan>
            <tspan fill="#ea4335">e</tspan>
          </text>
        </g>
      </g>
    </svg>
  );
}

function LocationMap() {
  return (
    <div className="relative h-[400px] overflow-hidden rounded-[6px] font-['Roboto']">
      <StreetMap />
      <div className="absolute top-[10px] left-[10px] flex h-10 text-[18px] leading-10 shadow-[0_1px_4px_-1px_rgba(0,0,0,0.3)]">
        <div className="w-[69px] rounded-l-[2px] bg-white text-center font-medium text-black">Map</div>
        <div className="w-[100px] rounded-r-[2px] bg-white text-center text-[#565656]">Satellite</div>
      </div>
      <div className="absolute top-[10px] right-[10px] flex h-10 w-10 items-center justify-center rounded-[2px] bg-white shadow-[0_1px_4px_-1px_rgba(0,0,0,0.3)]">
        <svg width="18" height="18" viewBox="0 0 18 18" fill="#666">
          <path d="M0 0v6h2V2h4V0zM16 0h-4v2h4v4h2V0zM16 16h-4v2h6v-6h-2zM2 12H0v6h6v-2H2z" />
        </svg>
      </div>
      <div className="absolute right-[10px] bottom-[137px] flex h-10 w-10 items-center justify-center rounded-[2px] bg-white shadow-[0_1px_4px_-1px_rgba(0,0,0,0.3)]">
        <svg width="18" height="32" viewBox="0 0 18 32">
          <path d="M4.500 13 1 15.500v7h2l2 1v8h8v-8l2-1h2v-7L13.500 13z" fill="#fbb829" stroke="#a77a2c" strokeWidth=".7" />
          <circle cx="9" cy="6" r="5.200" fill="#fbb829" stroke="#a77a2c" strokeWidth=".6" />
          <path d="M5.500 10.500h7L9 15z" fill="#f07c22" />
          <path d="M9 24v7.500" stroke="#a77a2c" strokeWidth=".8" />
        </svg>
      </div>
      <div className="absolute right-[10px] bottom-[24px] flex h-[81px] w-10 flex-col items-center rounded-[2px] bg-white shadow-[0_1px_4px_-1px_rgba(0,0,0,0.3)]">
        <svg width="40" height="81" viewBox="0 0 40 81" fill="#666">
          <path d="M18 11h4v7h7v4h-7v7h-4v-7h-7v-4h7zM11 59h18v4H11z" />
          <path d="M5 40.500h30" stroke="#e6e6e6" />
        </svg>
      </div>
      <div className="absolute right-0 bottom-0 flex h-[14px] items-center gap-[13px] bg-[#f5f5f5]/80 pt-[3px] pr-[6px] pl-[5px] text-[10px] leading-[11px] tracking-[0.060px] whitespace-nowrap text-black">
        <span>Keyboard shortcuts</span>
        <span>Map data ©2023 Google</span>
        <span>Terms</span>
        <span>Report a map error</span>
      </div>
    </div>
  );
}

/* ---------- activity log ---------- */

type Entry = { title: string; text?: string; meta: string };

function Timeline({ entries }: { entries: Entry[] }) {
  return (
    <div>
      {entries.map((e, i) => (
        <div key={e.title} className="flex">
          <div className="relative flex w-[22px] shrink-0 justify-start">
            <div className="ml-[6px] w-0 border-l border-dashed border-[#d7dcdf]" />
            <div
              className={
                "absolute left-0 h-[13px] w-[13px] rounded-full border-2 border-[#b8c4ca] bg-white " +
                (i === entries.length - 1 ? "top-[calc(50%-4px)]" : "top-[calc(50%-11px)]")
              }
            />
          </div>
          <div className={"min-w-0 grow " + (i === entries.length - 1 ? "" : "pb-[14px]")}>
            <div className="rounded-[7px] bg-[#ecf0f1] px-[14px] pt-[14px] pb-[11.500px] text-[14px] leading-[21px] tracking-[0.1px] text-[#596267]">
              <div className="font-semibold tracking-[0.140px] text-[#475056]">{e.title}</div>
              {e.text && <div className="mt-[4px]">{e.text}</div>}
              <div className={(e.text ? "mt-[5px]" : "mt-[6px]") + " -mr-[10px] text-[11.375px] tracking-[-0.030px] whitespace-pre-line text-[#6c8391]"}>{e.meta}</div>
            </div>
          </div>
        </div>
      ))}
    </div>
  );
}

const ratingLog: Entry[] = [
  { title: "Rating Survey Created", text: "Pending Response", meta: "SYSTEM AUTO-GENERATED - 16/06/2023\n03:33:44 PM" },
  { title: "Update Rating Status", text: "Results added manually", meta: "MUHAMAD NIZAM BIN BAHARADIN A BAHARUDIN\n- 06/12/2023 02:16:26 PM" },
];

const caseLog: Entry[] = [
  { title: "Create New Case: 0623-16003", meta: "ATAU SYSTEM - 16/06/2023 03:10:43 PM" },
  {
    title: "SMS Sent To 60122671890 : 0623-16003",
    text: "SMS Content: Etiqa: We've received your request. Tracking no.: 0623-16003. To track your status, go to Auto Assist Care on our website or on the Etiqa Smile app",
    meta: "SYSTEM AUTO-GENERATED - 16/06/2023\n03:10:43 PM",
  },
  {
    title: "Status update to open",
    text: "REMARK: recorded all the changes on the case to the database. (Changes are not listed to protect data privacy)",
    meta: "MUHAMAD EKHTISYAM HAZIQ BIN JALIUS -\n16/06/2023 03:12:55 PM",
  },
];

function RatingRow({ question, answer }: { question: string; answer: string }) {
  return (
    <div className="flex items-center justify-between">
      <div className="w-[155px] text-[14px] leading-[21px] font-medium tracking-[0.2px] text-[#475056]">{question}</div>
      <div className="w-[151px]">
        <Input value={answer} right />
      </div>
    </div>
  );
}

/* ---------- page ---------- */

export default function App() {
  return (
    <div className="min-h-[2676px] w-[1366px] bg-[#f3f3f3] font-['Inter',sans-serif]">
      <TopBar />
      <div className="flex items-start">
        <Sidebar />
        <main className="flex grow items-start gap-[21px] p-[21px]">
          <div className="flex w-[742px] flex-col gap-[21px]">
            <Card title="Customer Detail">
              <div className="flex flex-col gap-[17.500px] pt-[17.750px] pr-[17px] pb-[35px] pl-[18px]">
                <div className="grid grid-cols-3 gap-[21px]">
                  <Field label="Contact number" required>
                    <Phone value="122671890" filled />
                  </Field>
                  <Field label="Secondary contact number (if any)">
                    <Phone value="123456789" />
                  </Field>
                  <Field label="Third contact number (if any)">
                    <Phone value="123456789" />
                  </Field>
                </div>
                <Field label="Vehicle number" required className="w-[230px]">
                  <Input value="BULN123" />
                </Field>
                <div className="flex items-end gap-[21px]">
                  <Field label="Name of the customer" required className="w-[463px]">
                    <Input value="Ali" />
                  </Field>
                  <div className="pb-[12px]">
                    <Check label="Non owner" />
                  </div>
                </div>
                <div className="grid grid-cols-2 gap-[21px]">
                  <Field label="Vehicle make" required>
                    <Select value="YAMAHA" />
                  </Field>
                  <Field label="Vehicle model" required>
                    <Select value="Please Select" muted />
                  </Field>
                </div>
                <Field label="Entity" required>
                  <Segmented items={["Etiqa General Takaful Berhad", "Etiqa General Insurance\nBerhad", "Non-Etiqa"]} selected={0} />
                </Field>
                <Field label="Policy benefits">
                  <Segmented items={["50KM", "200KM", "300KM", "175KM\nPer Trip", "Unlimited", "Franchise", "Cash Job"]} selected={0} />
                </Field>
                <Field label="Campaign">
                  <Select value="Please select" muted />
                </Field>
                <div className="grid grid-cols-2 gap-[21px]">
                  <Field label="Email">
                    <Input />
                  </Field>
                  <Field label="Prefered language">
                    <Segmented items={["English", "Malay"]} selected={0} />
                  </Field>
                </div>
              </div>
            </Card>

            <Card title="Service Detail">
              <div className="flex flex-col gap-[17.500px] pt-[18px] pr-[17px] pb-[23px] pl-[18px]">
                <Field label="Service type" required>
                  <Select value="Breakdown Towing - Motorcycle" />
                </Field>
                <Field label="Sub-service">
                  <Segmented items={["Flat Tyre", "Cannot Start\nMotorcycle", "Brakes Problem", "Gears Problem"]} selected={2} />
                </Field>
                <Field label="Provider" required>
                  <Select value="ATA Baterikau" />
                </Field>
                <Field label="Add On" className="h-[61px]">
                  <Check label="Night shift (10pm-7am)" />
                </Field>
                <div>
                  <Label>Remarks</Label>
                  <div className="mb-[6.500px] text-[14px] leading-[21px] tracking-[0.1px] text-[#596267]">Notes for Technician to bring:</div>
                  <Segmented items={["Tools for tyre\nreplacement", "Air Pump", "Tyre patch", "New Battery"]} />
                  <div className="mt-[14px] h-[126px] rounded-[7px] border border-[#e9eef0] bg-[#f3f6f7]" />
                </div>
              </div>
            </Card>

            <Card title="Location Details">
              <div className="flex flex-col gap-[17.500px] pt-[17px] pr-[17px] pb-[18px] pl-[18px]">
                <LocationMap />
                <Field label="Customer location" required className="pt-px">
                  <div className="h-[168px] rounded-[7px] border border-[#e9eef0] bg-[#f3f6f7] text-[14px] leading-[21px] tracking-[0.1px]">
                    <div className="h-[43px] border-b border-[#dfe5e8] px-[17px] pt-[11px] text-[#999fa2]">GG65+7V Bukit Tagar, Selangor, Malaysia</div>
                    <div className="px-[17px] pt-[11px] text-[#d5dadd]">Additional info</div>
                  </div>
                </Field>
                <div className="flex gap-[21px] pt-[5px]">
                  <Field label="Latitude & Longitude" required className="w-[463px]">
                    <Input value="3.510685,101.509667" />
                  </Field>
                  <Field label="Share tracking map with customer?" className="w-[221px]">
                    <Segmented items={["Yes", "No"]} selected={0} />
                  </Field>
                </div>
                <div className="pt-px">
                  <Label>Destination</Label>
                  <div className="grid grid-cols-2 gap-[21px]">
                    <Check label="Customer preferred destination" />
                    <Check label="Schedule a tow" dark />
                  </div>
                </div>
                <Field label="Panel workshop">
                  <div className="grid grid-cols-2 gap-x-[21px] gap-y-[14px]">
                    <Select value="SELANGOR" />
                    <Select value="Semenyih" />
                    <div className="col-span-2">
                      <Select value="Please select workshop" muted />
                    </div>
                  </div>
                </Field>
              </div>
            </Card>
          </div>

          <div className="flex w-[361px] flex-col gap-[21px]">
            <Card
              title="Ratings"
              action={
                <button className="h-11 rounded-[7px] border border-[#d3dce2] bg-[#fcfdfd] px-[17px] pt-[2px] text-[14px] font-medium tracking-[0.2px] text-[#9f9478]">
                  Add Ratings
                </button>
              }
            >
              <div className="flex flex-col gap-[14px] px-[18px] pt-[18px] pb-[36px]">
                <RatingRow question="How did you find getting help through our web service?" answer="Easy" />
                <RatingRow question="How likely are you to recommend Etiqa Auto Assist Care (EAAC) to your family and friends?" answer="9" />
                <RatingRow question="How was the waiting time?" answer="Good" />
                <Field label="Suggestions (optional)" className="pt-px">
                  <div className="mt-[6px] flex h-[107px] items-end justify-between rounded-[7px] border border-[#e9eef0] bg-[#f3f6f7] pr-px pb-px text-[14px] leading-[21px] tracking-[0.1px] text-[#999fa2]">
                    <span className="self-start pt-[11px] pl-[17px]">TESTING</span>
                    <svg width="10" height="10" viewBox="0 0 10 10" stroke="#8b9093" strokeWidth="1">
                      <path d="M1 9l8-7M5.500 9.500 9 6" />
                    </svg>
                  </div>
                </Field>
              </div>
            </Card>

            <Card title="Ratings Activity Log(s)">
              <div className="px-[18px] pt-[18px] pb-[19px]">
                <Timeline entries={ratingLog} />
              </div>
            </Card>

            <Card title="Case Activity Log(s)">
              <div className="flex h-[480px] overflow-hidden">
                <div className="w-[342px] pt-[17px] pr-[18px] pl-[18px]">
                  <Timeline entries={caseLog} />
                </div>
                <div className="flex w-[17px] flex-col items-center bg-[#f1f1f1]">
                  <svg width="17" height="17" viewBox="0 0 17 17" fill="#a3a3a3">
                    <path d="M5 11h7L8.500 7z" />
                  </svg>
                  <div className="h-[126px] w-[13px] bg-[#c1c1c1]" />
                  <svg width="17" height="17" viewBox="0 0 17 17" fill="#505050" className="mt-auto">
                    <path d="M5 6.500h7l-3.500 4z" />
                  </svg>
                </div>
              </div>
            </Card>
          </div>
        </main>
      </div>
    </div>
  );
}
